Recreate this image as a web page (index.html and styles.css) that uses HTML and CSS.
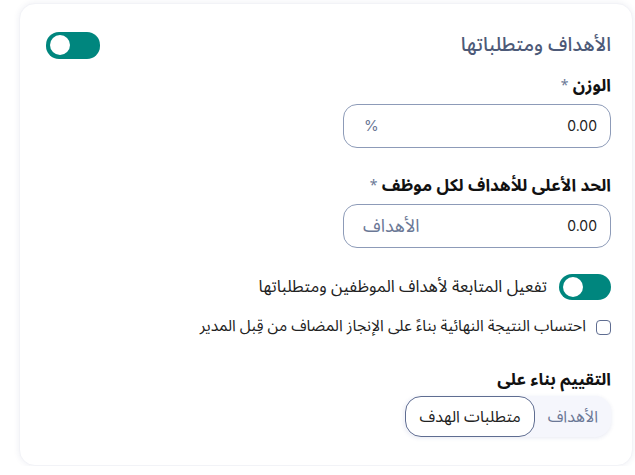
FILE: index.html
```html
<!DOCTYPE html>
<html lang="ar" dir="rtl">
<head>
<meta charset="utf-8">
<link rel="stylesheet" href="styles.css">
</head>
<body>
<div class="card">
  <div class="card-head">
    <h2 class="title">الأهداف ومتطلباتها</h2>
    <span class="toggle toggle-lg"><span class="knob"></span></span>
  </div>

  <div class="field">
    <label class="label">الوزن <span class="req">*</span></label>
    <div class="input">
      <span class="value">0.00</span>
      <span class="suffix">%</span>
    </div>
  </div>

  <div class="field field-2">
    <label class="label">الحد الأعلى للأهداف لكل موظف <span class="req">*</span></label>
    <div class="input">
      <span class="value">0.00</span>
      <span class="suffix suffix-text">الأهداف</span>
    </div>
  </div>

  <div class="switch-row">
    <span class="toggle"><span class="knob"></span></span>
    <span class="switch-text">تفعيل المتابعة لأهداف الموظفين ومتطلباتها</span>
  </div>

  <div class="check-row">
    <span class="checkbox"></span>
    <span class="check-text">احتساب النتيجة النهائية بناءً على الإنجاز المضاف من قِبل المدير</span>
  </div>

  <div class="eval">
    <div class="label">التقييم بناء على</div>
    <div class="segmented">
      <span class="seg">الأهداف</span>
      <span class="seg seg-active">متطلبات الهدف</span>
    </div>
  </div>
</div>
</body>
</html>
```

FILE: styles.css
```css
* { box-sizing: border-box; }
html, body { margin: 0; background: #fff; }
body {
  padding: 3px 2px 0 19px;
  font-family: "Noto Sans Arabic", "DejaVu Sans", "Noto Sans", sans-serif;
  color: #1b1b1f;
}
.card {
  width: 614px;
  height: 463px;
  border-radius: 16px;
  background: #fff;
  box-shadow: 0 0 6px rgba(40, 50, 120, 0.08);
  border: 1px solid #f2f3f7;
  padding: 27px 21px 0 26px;
}
.card-head {
  display: flex;
  justify-content: space-between;
  align-items: center;
  height: 28px;
}
.title {
  margin: 0;
  font-size: 19.5px;
  font-weight: 500;
  line-height: 28px;
  color: #4d5a78;
}
.toggle {
  width: 52px;
  height: 26px;
  border-radius: 13px;
  background: #00867e;
  display: inline-flex;
  align-items: center;
  justify-content: flex-end;
  padding: 0 4px;
  flex: none;
}
.toggle-lg { width: 54px; height: 27px; }
.knob {
  width: 20px;
  height: 20px;
  border-radius: 50%;
  background: #fff;
}
.field { width: 268px; margin-top: 16px; }
.field-2 { margin-top: 27px; }
.label {
  display: block;
  font-size: 17px;
  font-weight: 700;
  color: #111;
  line-height: 22px;
}
.req { color: #6b7896; font-weight: 400; font-size: 14px; vertical-align: top; }
.input {
  margin-top: 7px;
  height: 44px;
  border: 1px solid #8d9bb8;
  border-radius: 14px;
  display: flex;
  align-items: center;
  justify-content: space-between;
  padding: 0 13px 0 20px;
}
.value { font-family: "Inter", "Roboto", sans-serif; font-size: 14px; color: #222; line-height: 20px; }
.suffix { font-family: "Inter", sans-serif; font-size: 15px; color: #6b7896; line-height: 20px; }
.suffix-text { font-family: inherit; font-size: 18px; margin-left: -1px; }
.switch-row {
  margin-top: 26px;
  display: flex;
  align-items: center;
  gap: 12px;
}
.switch-text { font-size: 16.7px; line-height: 22px; color: #222; }
.check-row {
  margin-top: 16px;
  display: flex;
  align-items: center;
  gap: 10px;
}
.checkbox {
  width: 15px;
  height: 15px;
  border: 1.5px solid #5f6d91;
  border-radius: 4px;
  flex: none;
}
.check-text { font-size: 15.6px; line-height: 22px; color: #222; }
.eval { margin-top: 31px; }
.segmented {
  margin-top: 5px;
  display: inline-flex;
  align-items: center;
  background: #f5f6fc;
  border-radius: 16px;
  box-shadow: 0 1px 4px rgba(60, 70, 150, 0.12);
  height: 41px;
  padding: 0 0 0 1px;
}
.seg {
  font-size: 16px;
  color: #6b7896;
  padding: 0 13px;
  height: 41px;
  display: flex;
  align-items: center;
}
.seg-active {
  background: #fff;
  color: #222;
  border: 1px solid #5f6d91;
  border-radius: 16px;
  padding: 0 13px 0 14px;
}
```
